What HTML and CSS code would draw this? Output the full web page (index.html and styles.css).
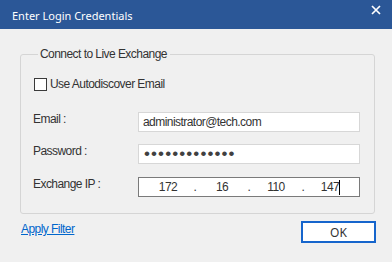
FILE: index.html
```
<!DOCTYPE html>
<html>
<head>
<meta charset="utf-8">
<link rel="stylesheet" href="styles.css">
</head>
<body>
<div class="dialog">
  <div class="titlebar">
    <span class="title">Enter Login Credentials</span>
    <svg class="close" width="10" height="10" viewBox="0 0 10 10"><path d="M1 1L9 9M9 1L1 9" stroke="#fff" stroke-width="1.7"/></svg>
  </div>
  <fieldset class="group">
    <legend class="legend">Connect to Live Exchange</legend>
    <div class="check-row">
      <span class="checkbox"></span>
      <span class="check-label">Use Autodiscover Email</span>
    </div>
    <div class="field-row email-row">
      <span class="label">Email :</span>
      <div class="input"><span class="value">administrator@tech.com</span></div>
    </div>
    <div class="field-row pass-row">
      <span class="label">Password :</span>
      <div class="input"><span class="dots">•••••••••••••</span></div>
    </div>
    <div class="field-row ip-row">
      <span class="label">Exchange IP :</span>
      <div class="input ip-input">
        <span class="octet">172</span><span class="sep">.</span>
        <span class="octet">16</span><span class="sep">.</span>
        <span class="octet">110</span><span class="sep">.</span>
        <span class="octet">147<span class="caret"></span></span>
      </div>
    </div>
  </fieldset>
  <div class="footer">
    <a class="link" href="#">Apply Filter</a>
    <button class="ok">OK</button>
  </div>
</div>
</body>
</html>
```
FILE: styles.css
```
html, body {
  margin: 0;
  padding: 0;
  background: #f0f0f0;
}
.dialog {
  width: 392px;
  height: 262px;
  background: #f0f0f0;
  font-family: "Liberation Sans", Arial, sans-serif;
  font-size: 12px;
  letter-spacing: -0.55px;
  color: #333;
  overflow: hidden;
}
.titlebar {
  height: 29px;
  background: #2b5797;
  color: #fff;
  display: flex;
  align-items: flex-start;
  justify-content: space-between;
  padding: 0 11px 0 12px;
  box-sizing: border-box;
}
.title {
  font-family: "Noto Sans", "Open Sans", sans-serif;
  font-size: 11px;
  letter-spacing: 0;
  line-height: 16px;
  padding-top: 8px;
}
.close {
  margin-top: 5px;
}
.group {
  margin: 17px 17px 0 20px;
  padding: 15px 14px 16px 12px;
  border: 1px solid #d5d5d5;
  border-radius: 3px;
  min-width: 0;
}
.legend {
  padding: 0 3px 0 2px;
  margin-left: 5px;
  line-height: 16px;
  color: #333;
}
.check-row {
  display: flex;
  align-items: center;
  height: 15px;
  line-height: 15px;
  margin-left: 1px;
  gap: 3px;
}
.checkbox {
  width: 11px;
  height: 11px;
  border: 1px solid #3a3a3a;
  background: #fff;
}
.field-row {
  display: grid;
  grid-template-columns: 105px 222px;
  align-items: start;
}
.email-row { margin-top: 20px; }
.pass-row { margin-top: 12px; }
.ip-row { margin-top: 13px; }
.label {
  line-height: 15px;
}
.input {
  height: 20px;
  box-sizing: border-box;
  border: 1px solid #d7d7d7;
  background: #fff;
  display: flex;
  align-items: center;
  padding-left: 4px;
  line-height: 15px;
}
.dots {
  font-family: "Liberation Sans", Arial, sans-serif;
  font-size: 17px;
  letter-spacing: 1.1px;
  color: #404040;
  line-height: 16px;
  padding-left: 1px;
}
.ip-input {
  border-color: #7a7a7a;
  padding-left: 7px;
}
.octet {
  width: 44px;
  text-align: center;
  display: inline-flex;
  justify-content: center;
  align-items: center;
}
.sep {
  width: 10px;
  text-align: center;
}
.caret {
  display: inline-block;
  width: 1px;
  height: 15px;
  background: #000;
  margin-right: -1px;
}
.footer {
  display: flex;
  justify-content: space-between;
  align-items: flex-start;
  padding: 7px 16px 0 21px;
}
.link {
  color: #0066cc;
  text-decoration: underline;
  line-height: 15px;
  margin-top: 1px;
}
.ok {
  width: 75px;
  height: 22px;
  box-sizing: border-box;
  border: 2px solid #1665cc;
  background: #fff;
  font-family: "Noto Sans", "Open Sans", sans-serif;
  font-size: 12px;
  color: #333;
  padding: 0;
  border-radius: 0;
}
```
